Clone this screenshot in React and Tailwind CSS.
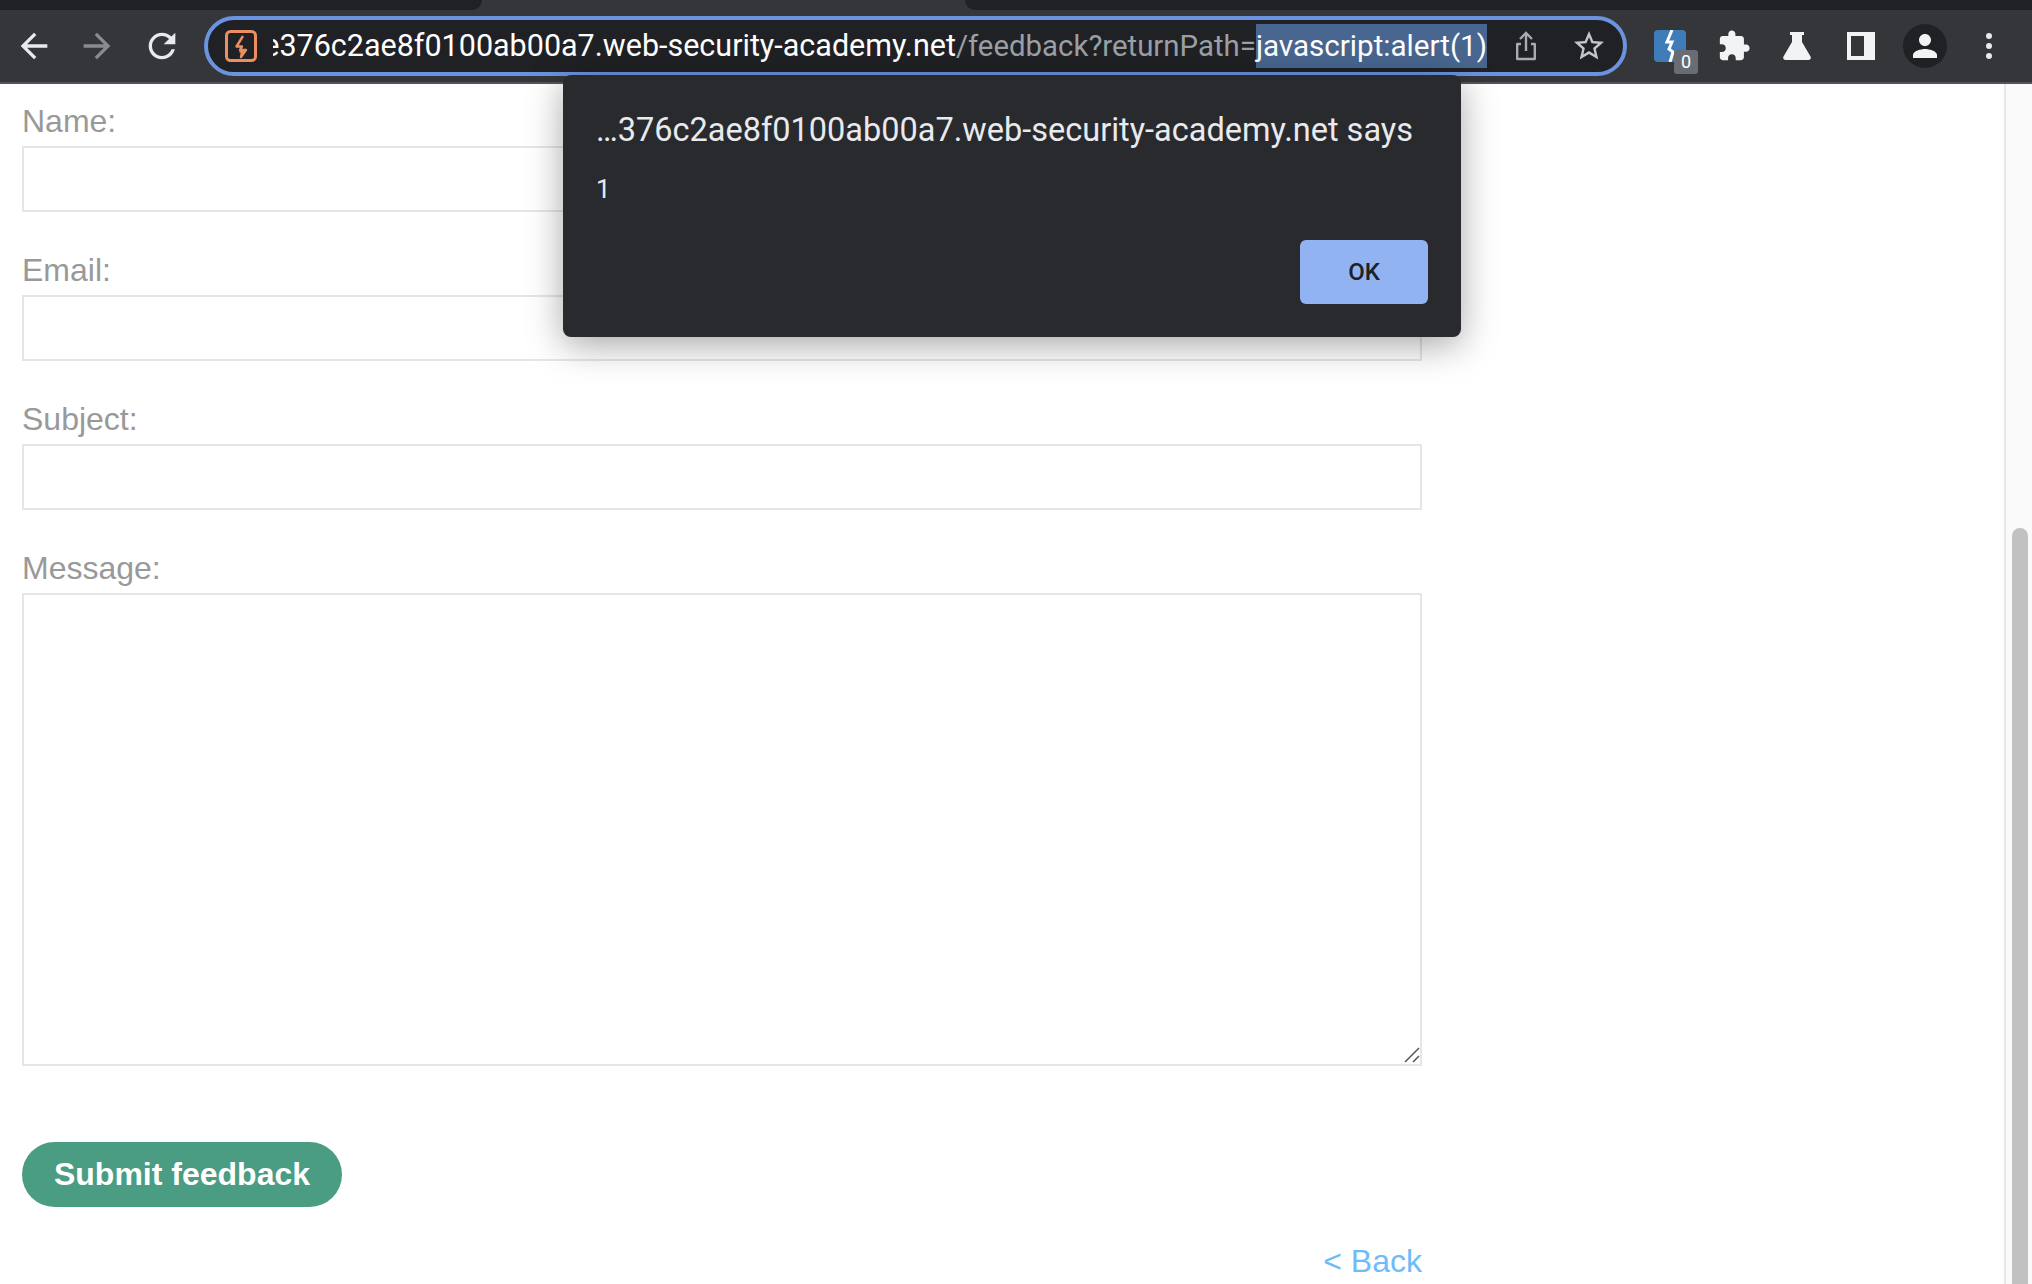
import React from "react";

function Icon({ d, className }) {
  return (
    <svg viewBox="0 0 24 24" fill="currentColor" className={className}>
      <path d={d} />
    </svg>
  );
}

const BACK = "M20 11H7.83l5.59-5.59L12 4l-8 8 8 8 1.41-1.41L7.83 13H20v-2z";
const FORWARD = "M4 11h12.17l-5.59-5.59L12 4l8 8-8 8-1.41-1.41L16.17 13H4v-2z";
const RELOAD =
  "M17.65 6.35C16.2 4.9 14.21 4 12 4c-4.42 0-7.99 3.58-7.99 8s3.57 8 7.99 8c3.73 0 6.84-2.55 7.73-6h-2.08c-.82 2.33-3.04 4-5.65 4-3.31 0-6-2.69-6-6s2.69-6 6-6c1.66 0 3.14.69 4.22 1.78L13 11h7V4l-2.35 2.35z";
const STAR =
  "M22 9.24l-7.19-.62L12 2 9.19 8.63 2 9.24l5.46 4.73L5.82 21 12 17.27 18.18 21l-1.63-7.03L22 9.24zM12 15.4l-3.76 2.27 1-4.28-3.32-2.88 4.38-.38L12 6.1l1.71 4.04 4.38.38-3.32 2.88 1 4.28L12 15.4z";
const PUZZLE =
  "M20.5 11H19V7c0-1.1-.9-2-2-2h-4V3.5C13 2.12 11.88 1 10.5 1S8 2.12 8 3.5V5H4c-1.1 0-1.99.9-1.99 2v3.8H3.5c1.49 0 2.7 1.21 2.7 2.7s-1.21 2.7-2.7 2.7H2V20c0 1.1.9 2 2 2h3.8v-1.5c0-1.49 1.21-2.7 2.7-2.7 1.49 0 2.7 1.21 2.7 2.7V22H17c1.1 0 2-.9 2-2v-4h1.5c1.38 0 2.5-1.12 2.5-2.5S21.88 11 20.5 11z";
const PERSON =
  "M12 12c2.21 0 4-1.79 4-4s-1.79-4-4-4-4 1.79-4 4 1.79 4 4 4zm0 2c-2.67 0-8 1.34-8 4v2h16v-2c0-2.66-5.33-4-8-4z";

function Field({ label, children }) {
  return (
    <div className="flex flex-col">
      <label className="h-[36px] mb-[7px] text-[32px] leading-[36px] text-[#999999]">{label}</label>
      {children}
    </div>
  );
}

function Toolbar() {
  return (
    <div className="h-[84px] shrink-0 bg-[#35363a]">
      <div className="flex h-[10px]">
        <div className="w-[482px] bg-[#202124] rounded-br-[10px]"></div>
        <div className="w-[483px]"></div>
        <div className="flex-1 bg-[#202124] rounded-bl-[10px]"></div>
      </div>
      <div className="flex items-center h-[72px] pl-[14px] border-b-2 border-[#54555a] box-content">
        <div className="flex items-center gap-[23px] text-[#e8eaed]">
          <Icon d={BACK} className="w-10 h-10" />
          <Icon d={FORWARD} className="w-10 h-10 text-[#8a8b8e]" />
          <Icon d={RELOAD} className="w-10 h-10 ml-[2px]" />
        </div>
        <div className="ml-[22px] w-[1423px] h-[60px] shrink-0 flex items-center rounded-full border-4 border-[#6b93e0] bg-[#202124] pl-[17px]">
          <svg viewBox="0 0 32 32" className="w-8 h-8 shrink-0" fill="none">
            <rect x="1.5" y="1.5" width="29" height="29" rx="4" stroke="#ea8f63" strokeWidth="3" />
            <path d="M18 6l-6.5 10.5h5.5l-2 3.5h6l-5 7 1.2-5.5h-2.7" stroke="#ea8f63" strokeWidth="2.4" strokeLinejoin="round" />
          </svg>
          <div className="ml-4 w-[1214px] flex justify-end overflow-hidden whitespace-nowrap text-[29.6px] leading-[44px] font-['Roboto',sans-serif]">
            <span className="text-white text-[30.5px]">e376c2ae8f0100ab00a7.web-security-academy.net</span>
            <span className="text-[#9aa0a6] text-[29.4px]">/feedback?returnPath=</span>
            <span className="text-white bg-[#48668f]">javascript:alert(1)</span>
          </div>
          <svg viewBox="0 0 24 32" className="ml-[27px] w-[24px] h-[32px] shrink-0" fill="none" stroke="#a8abaf" strokeWidth="2.4">
            <path d="M12 21V3M6 9l6-6 6 6" />
            <path d="M7 14H3.2v15h17.6V14H17" strokeLinejoin="round" />
          </svg>
          <Icon d={STAR} className="ml-[33px] w-[36px] h-[36px] text-[#c4c7ca] shrink-0" />
        </div>
        <div className="relative ml-[27px] w-[32px] h-[32px] rounded-[4px] bg-[#3f7db8]">
          <svg viewBox="0 0 32 32" className="w-8 h-8" fill="none" stroke="#ffffff" strokeWidth="3">
            <path d="M18 0l-5 12h5l-3 7 4 3-3 10" />
          </svg>
          <span className="absolute left-[20px] top-[20px] w-6 h-6 rounded-[3px] bg-[#696d73] text-white text-[18px] leading-6 text-center font-['Roboto',sans-serif]">0</span>
        </div>
        <Icon d={PUZZLE} className="ml-[31px] w-[34px] h-[34px] text-[#f1f3f4]" />
        <svg viewBox="0 0 28 28" className="ml-[32px] w-[28px] h-[28px]" fill="#f1f3f4">
          <path d="M7 0h14v3h-2v7l8.5 14.5c.9 1.6-.2 3.5-2 3.5h-23c-1.8 0-2.9-1.9-2-3.5L9 10V3H7z" />
        </svg>
        <svg viewBox="0 0 28 28" className="ml-[36px] w-[28px] h-[28px]" fill="#f1f3f4">
          <path fillRule="evenodd" d="M0 0h28v28H0zM4 4v20h13V4z" />
        </svg>
        <div className="ml-[28px] w-[44px] h-[44px] rounded-full bg-[#202124] flex items-center justify-center">
          <Icon d={PERSON} className="w-[36px] h-[36px] text-[#f1f3f4]" />
        </div>
        <div className="ml-[39px] flex flex-col gap-[4px]">
          <span className="w-[6px] h-[6px] rounded-full bg-[#e8eaed]"></span>
          <span className="w-[6px] h-[6px] rounded-full bg-[#e8eaed]"></span>
          <span className="w-[6px] h-[6px] rounded-full bg-[#e8eaed]"></span>
        </div>
      </div>
    </div>
  );
}

export default function App() {
  const inputClass = "w-full h-[66px] border-2 border-[#e6e6e6] bg-white outline-none";

  return (
    <div className="relative flex flex-col w-[2032px] h-[1284px] overflow-hidden bg-white font-['Liberation_Sans',Arial,sans-serif]">
      <Toolbar />

      <div className="flex flex-1 min-h-0">
        <main className="w-[2004px] pl-[22px] pt-[19px]">
          <form className="w-[1400px] flex flex-col gap-[40px]">
            <Field label="Name:">
              <input type="text" className={inputClass} />
            </Field>
            <Field label="Email:">
              <input type="text" className={inputClass} />
            </Field>
            <Field label="Subject:">
              <input type="text" className={inputClass} />
            </Field>
            <Field label="Message:">
              <div className="relative">
                <textarea className="w-full h-[473px] border-2 border-[#e6e6e6] bg-white outline-none block resize-none"></textarea>
                {/* browser's own grip comes out too small */}
                <svg viewBox="0 0 16 16" className="absolute right-[2px] bottom-[3px] w-4 h-4" fill="none" stroke="#555555" strokeWidth="1.5">
                  <path d="M1 15L15 1M9 15l6-6" />
                </svg>
              </div>
            </Field>
          </form>
          <button className="mt-[76px] block w-[320px] h-[65px] pb-[2px] rounded-full bg-[#4a9c82] text-white text-[32px] font-bold">
            Submit feedback
          </button>
          <div className="w-[1400px] mt-[36px] text-right text-[32px] leading-[36px] text-[#6ebcf7]">
            <a href="#">&lt; Back</a>
          </div>
        </main>
        <div className="flex-1 flex justify-center border-l-2 border-[#e7e7e7] bg-[#fafafa] pl-[2px] pt-[444px]">
          <div className="w-4 h-full rounded-t-full bg-[#c1c1c1]"></div>
        </div>
      </div>

      <div className="absolute left-[563px] top-[75px] w-[898px] h-[262px] rounded-[8px] bg-[#292a2d] shadow-[0_8px_36px_rgba(0,0,0,0.35)] font-['Roboto',sans-serif] text-[#e8eaed]">
        <div className="pl-[33px] pt-[36px] text-[32.5px] leading-[38px]">…376c2ae8f0100ab00a7.web-security-academy.net says</div>
        <div className="pl-[33px] mt-[21px] text-[26px] leading-[38px]">1</div>
        <div className="flex justify-end pr-[33px] mt-[32px]">
          <button className="w-[128px] h-[64px] rounded-[6px] bg-[#92b3f1] text-[#202124] text-[24px] font-medium">OK</button>
        </div>
      </div>
    </div>
  );
}
